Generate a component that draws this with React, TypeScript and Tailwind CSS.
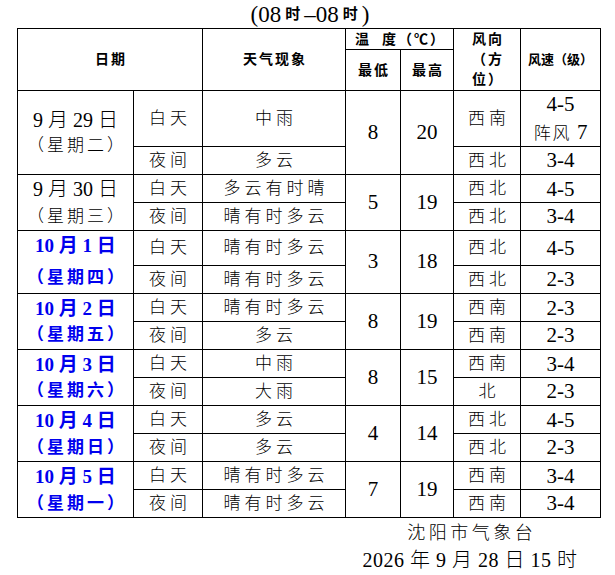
import React from "react";

type Day = {
  d1: string;
  d2: string;
  blue: boolean;
  wA: string;
  wB: string;
  lo: string;
  hi: string;
  dirA: string;
  dirB: string;
  spA: string;
  spB: string;
  lead: string;
};

const days: Day[] = [
  { d1: "9 月 29 日", d2: "（星期二）", blue: false, wA: "中雨", wB: "多云", lo: "8", hi: "20", dirA: "西南", dirB: "西北", spA: "4-5", spB: "3-4", lead: "leading-[26px]" },
  { d1: "9 月 30 日", d2: "（星期三）", blue: false, wA: "多云有时晴", wB: "晴有时多云", lo: "5", hi: "19", dirA: "西北", dirB: "西北", spA: "4-5", spB: "3-4", lead: "leading-[28px]" },
  { d1: "10 月 1 日", d2: "（星期四）", blue: true, wA: "晴有时多云", wB: "晴有时多云", lo: "3", hi: "18", dirA: "西北", dirB: "西北", spA: "4-5", spB: "2-3", lead: "leading-[32px]" },
  { d1: "10 月 2 日", d2: "（星期五）", blue: true, wA: "晴有时多云", wB: "多云", lo: "8", hi: "19", dirA: "西南", dirB: "西南", spA: "2-3", spB: "2-3", lead: "leading-[26px]" },
  { d1: "10 月 3 日", d2: "（星期六）", blue: true, wA: "中雨", wB: "大雨", lo: "8", hi: "15", dirA: "西南", dirB: "北", spA: "3-4", spB: "2-3", lead: "leading-[26px]" },
  { d1: "10 月 4 日", d2: "（星期日）", blue: true, wA: "多云", wB: "多云", lo: "4", hi: "14", dirA: "西北", dirB: "西北", spA: "4-5", spB: "2-3", lead: "leading-[27px]" },
  { d1: "10 月 5 日", d2: "（星期一）", blue: true, wA: "晴有时多云", wB: "晴有时多云", lo: "7", hi: "19", dirA: "西南", dirB: "西南", spA: "3-4", spB: "3-4", lead: "leading-[27px]" },
];

const serif = "font-[family-name:Liberation_Serif,Noto_Sans_CJK_SC,serif]";
const cellBase = "border-r border-b border-black flex items-center justify-center text-center";
const head = "text-[14px] font-bold tracking-[2px] pl-[2px]";

function Cn({ children }: { children: React.ReactNode }) {
  return <span className="tracking-[4px] pl-[4px] text-[17px] font-light">{children}</span>;
}

function Num({ children }: { children: React.ReactNode }) {
  return <span className={`${serif} text-[21px] font-normal`}>{children}</span>;
}

export default function App() {
  return (
    <div className={`w-[615px] h-[575px] bg-white text-black ${serif}`}>
      <div className="h-[28px] w-[620px] flex items-center justify-center">
        <span className={`${serif} text-[23px] leading-none`}>(08</span>
        <span className="text-[15px] font-bold mx-[4px] leading-none">时</span>
        <span className={`${serif} text-[23px] leading-none`}>–08</span>
        <span className="text-[15px] font-bold mx-[4px] leading-none">时</span>
        <span className={`${serif} text-[23px] leading-none`}>)</span>
      </div>
      <div className="ml-[17px] w-[584px] border-l border-t border-black grid grid-cols-[116px_69px_143px_55px_53px_67px_80px] grid-rows-[21px_41px_56px_28px_28px_28px_35px_28px_28px_28px_28px_28px_28px_28px_28px_28px]">
        <div className={`${cellBase} col-span-2 row-span-2 ${head}`}>日期</div>
        <div className={`${cellBase} row-span-2 ${head}`}>天气现象</div>
        <div className={`${cellBase} col-span-2 ${head}`}>温&nbsp;&nbsp;度（℃）</div>
        <div className={`${cellBase} row-span-2 flex-col ${head} leading-[20px]`}>
          <span>风向</span>
          <span>（方</span>
          <span>位）</span>
        </div>
        <div className={`${cellBase} row-span-2 text-[13px] font-bold`}>风速（级）</div>
        <div className={`${cellBase} ${head}`}>最低</div>
        <div className={`${cellBase} ${head}`}>最高</div>
        {days.map((d, i) => (
          <React.Fragment key={i}>
            <div
              className={`${cellBase} row-span-2 flex-col ${d.lead} ${
                d.blue ? "text-[#0000ee] font-bold" : "font-light"
              }`}
            >
              <span className={`whitespace-pre ${serif} ${d.blue ? "text-[19px]" : "text-[20px]"}`}>{d.d1}</span>
              <span className="whitespace-pre text-[17px] tracking-[3px] pl-[3px]">{d.d2}</span>
            </div>
            <div className={cellBase}>
              <Cn>白天</Cn>
            </div>
            <div className={cellBase}>
              <Cn>{d.wA}</Cn>
            </div>
            <div className={`${cellBase} row-span-2`}>
              <Num>{d.lo}</Num>
            </div>
            <div className={`${cellBase} row-span-2`}>
              <Num>{d.hi}</Num>
            </div>
            <div className={cellBase}>
              <Cn>{d.dirA}</Cn>
            </div>
            <div className={`${cellBase} flex-col leading-[28px]`}>
              {i === 0 ? (
                <>
                  <Num>4-5</Num>
                  <span className="whitespace-pre">
                    <span className="text-[17px] font-light tracking-[2px]">阵风</span>
                    <Num> 7</Num>
                  </span>
                </>
              ) : (
                <Num>{d.spA}</Num>
              )}
            </div>
            <div className={cellBase}>
              <Cn>夜间</Cn>
            </div>
            <div className={cellBase}>
              <Cn>{d.wB}</Cn>
            </div>
            <div className={cellBase}>
              <Cn>{d.dirB}</Cn>
            </div>
            <div className={cellBase}>
              <Num>{d.spB}</Num>
            </div>
          </React.Fragment>
        ))}
      </div>
      <div className="ml-[350px] w-[240px] flex flex-col items-center mt-[2px]">
        <span className="text-[18px] leading-[27px] tracking-[3.5px] font-light pl-[3.5px]">沈阳市气象台</span>
        <span className={`${serif} text-[20px] leading-[27px] whitespace-pre font-light tracking-[0.5px]`}>2026 年 9 月 28 日 15 时</span>
      </div>
    </div>
  );
}
